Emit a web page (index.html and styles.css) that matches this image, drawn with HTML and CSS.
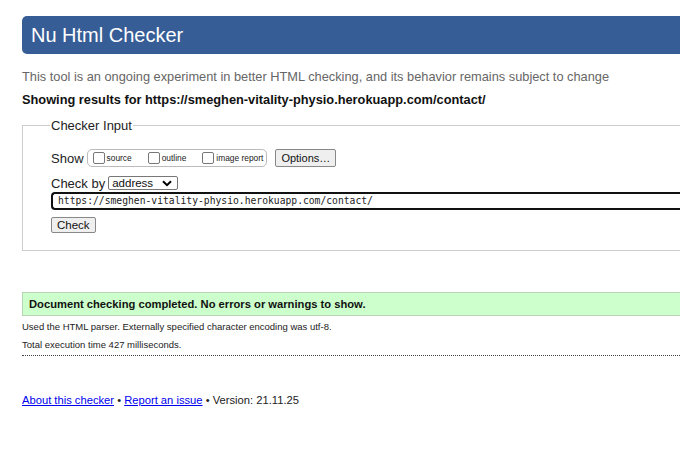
FILE: index.html
```html
<!DOCTYPE html>
<html>
<head>
<meta charset="utf-8">
<link rel="stylesheet" href="styles.css">
</head>
<body>
<div class="page">
  <h1 class="title">Nu Html Checker</h1>
  <p class="intro">This tool is an ongoing experiment in better HTML checking, and its behavior remains subject to change</p>
  <p class="showing">Showing results for https://smeghen-vitality-physio.herokuapp.com/contact/</p>
  <fieldset class="input-box">
    <legend class="legend">Checker Input</legend>
    <div class="row show-row">
      <span class="lbl">Show</span>
      <span class="opts">
        <label class="opt"><span class="cb"></span>source</label>
        <label class="opt"><span class="cb"></span>outline</label>
        <label class="opt"><span class="cb"></span>image report</label>
      </span>
      <span class="btn options">Options…</span>
    </div>
    <div class="row by-row">
      <span class="lbl">Check by</span>
      <span class="select">address<svg class="chev" width="10" height="7" viewBox="0 0 10 7"><path d="M1 1.2 L5 5.2 L9 1.2" fill="none" stroke="#000" stroke-width="2"/></svg></span>
    </div>
    <div class="url">https://smeghen-vitality-physio.herokuapp.com/contact/</div>
    <div class="row"><span class="btn check">Check</span></div>
  </fieldset>
  <div class="success">Document checking completed. No errors or warnings to show.</div>
  <p class="detail">Used the HTML parser. Externally specified character encoding was utf-8.</p>
  <p class="detail">Total execution time 427 milliseconds.</p>
  <hr class="dots">
  <p class="footer"><a href="#">About this checker</a> • <a href="#">Report an issue</a> • Version: 21.11.25</p>
</div>
</body>
</html>
```
FILE: styles.css
```css
html, body { margin: 0; padding: 0; overflow: hidden; background: #fff; }
body { font-family: "Liberation Sans", Arial, sans-serif; color: #000; }
.page { width: 760px; padding: 16px 0 0 22px; }
.title {
  margin: 0;
  height: 38px;
  box-sizing: border-box;
  background: #365d95;
  color: #fff;
  font-weight: normal;
  font-size: 20px;
  line-height: 38px;
  padding-left: 9px;
  border-radius: 5px;
}
.intro { margin: 15px 0 0; font-size: 12.8px; line-height: 16px; color: #666; }
.showing { margin: 7px 0 0; font-size: 12.8px; line-height: 16px; font-weight: bold; color: #111; }
.input-box {
  margin: 10px 0 0;
  border: 1px solid #ccc;
  border-right: none;
  padding: 5px 0 17px 28px;
}
.legend { font-size: 13px; color: #222; padding: 0 1px; margin-left: -1px; }
.row { display: flex; align-items: center; }
.lbl { font-size: 13px; color: #222; }
.show-row { margin-top: 11px; height: 18px; }
.opts {
  display: flex; align-items: center;
  margin-left: 3px; height: 16px;
  border: 1px solid #bbb; border-radius: 5px;
  padding: 0 3px 0 5px;
  font-size: 8.4px; color: #222;
}
.opt { display: flex; align-items: center; margin-right: 16px; }
.opt:last-child { margin-right: 0; }
.cb { width: 10px; height: 10px; border: 1px solid #777; border-radius: 2px; margin-right: 2px; background: #fff; }
.btn {
  display: inline-block; box-sizing: border-box;
  border: 1px solid #888; border-radius: 2px;
  background: #efefef;
  font-size: 11.5px; color: #111;
}
.options { margin-left: 8px; height: 18px; line-height: 16px; padding: 0 5px; font-size: 11px; }
.by-row { margin-top: 9px; height: 14px; }
.select {
  display: flex; align-items: center; justify-content: space-between;
  box-sizing: border-box;
  margin-left: 3px; width: 70px; height: 14px;
  border: 1px solid #777; border-radius: 2px;
  font-size: 11.5px; padding: 0 5px 0 3px; color: #111;
}
.url {
  margin-top: 2px;
  height: 18px; box-sizing: border-box;
  border: 2px solid #111; border-right: none;
  border-radius: 4px 0 0 4px;
  font-family: "DejaVu Sans Mono", "Liberation Mono", monospace;
  font-size: 9.7px; line-height: 14px;
  padding-left: 5px; color: #222;
}
.check { margin-top: 7px; height: 16px; line-height: 14px; padding: 0 5px; font-size: 11.5px; }
.success {
  margin-top: 41px;
  height: 24px; box-sizing: border-box;
  background: #ccffcc;
  border: 1px solid #b6d6b6; border-right: none;
  font-weight: bold; font-size: 11.2px; line-height: 22px;
  padding-left: 6px; color: #111;
}
.detail { margin: 4px 0 0; font-size: 9.5px; line-height: 13px; color: #222; }
.detail + .detail { margin-top: 5px; }
.dots { margin: 4px 0 0; border: none; border-top: 1px dotted #444; height: 0; }
.footer { margin: 38px 0 0; font-size: 11.2px; color: #222; }
.footer a { color: #0000ee; }
```
